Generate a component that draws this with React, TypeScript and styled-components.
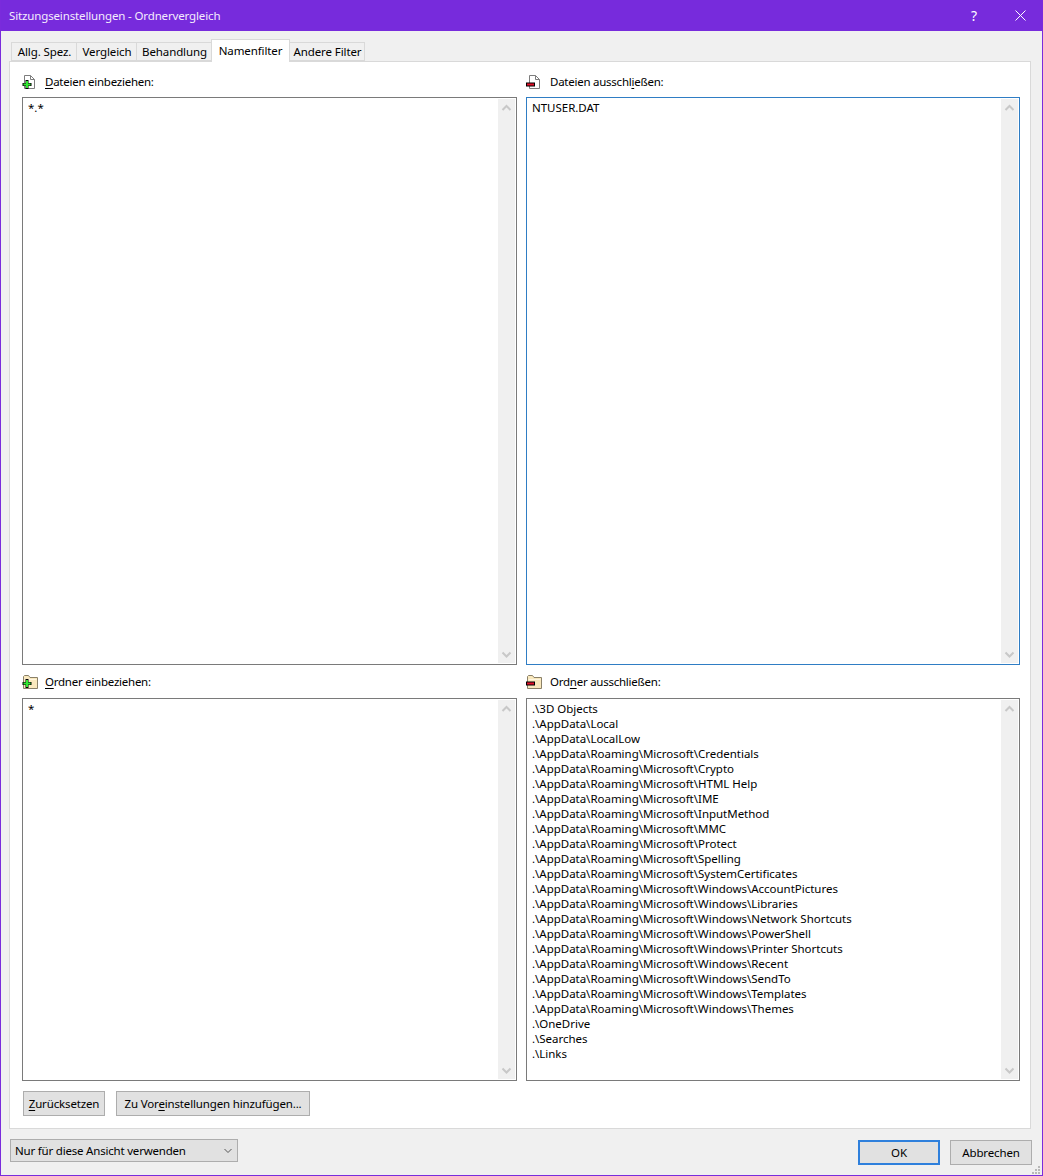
import React from 'react'
import styled, { createGlobalStyle } from 'styled-components'

const GlobalStyle = createGlobalStyle`
  html, body {
    margin: 0;
    padding: 0;
    background: #f0f0f0;
  }
  body {
    font-family: 'Noto Sans', 'Open Sans', sans-serif;
    font-size: 11.5px;
    color: #000;
  }
`

const Window = styled.div`
  width: 1043px;
  height: 1176px;
  box-sizing: border-box;
  display: flex;
  flex-direction: column;
  background: #f0f0f0;
  border: 1px solid #7a2bdc;
  border-top: 0;
  position: relative;
  overflow: hidden;
`

const TitleBar = styled.div`
  height: 31px;
  flex: none;
  margin: 0 -1px;
  display: flex;
  align-items: center;
  justify-content: space-between;
  padding: 0 0 0 9px;
  background: #772bdc;
  color: #f4ecfd;
  letter-spacing: -0.14px;
`

const TitleButtons = styled.div`
  display: flex;
  align-items: center;
`

const TitleButton = styled.div`
  width: 46px;
  height: 31px;
  display: flex;
  align-items: center;
  justify-content: center;
  font-size: 14px;
  color: #fff;
`

const Body = styled.div`
  flex: 1;
  display: flex;
  flex-direction: column;
  padding: 8px 11px 0 8px;
  min-height: 0;
`

const TabStrip = styled.div`
  display: flex;
  align-items: flex-end;
  height: 22px;
  padding-left: 3px;
  position: relative;
  z-index: 1;
  letter-spacing: -0.1px;
`

const Tab = styled.div<{ $active?: boolean; $width: number }>`
  width: ${({ $width }) => $width}px;
  box-sizing: border-box;
  height: ${({ $active }) => ($active ? '23px' : '19px')};
  margin-bottom: ${({ $active }) => ($active ? '-1px' : '0')};
  margin-left: -1px;
  position: relative;
  display: flex;
  align-items: center;
  justify-content: center;
  background: ${({ $active }) => ($active ? '#fff' : '#f0f0f0')};
  border: 1px solid #d9d9d9;
  border-bottom: ${({ $active }) => ($active ? '0' : '1px solid #d9d9d9')};
  z-index: ${({ $active }) => ($active ? 2 : 1)};
  white-space: nowrap;
  padding-bottom: ${({ $active }) => ($active ? '2px' : '0')};
  padding-left: ${({ $active }) => ($active ? '0' : '1px')};
`

const Panel = styled.div`
  width: 1022px;
  height: 1068px;
  box-sizing: border-box;
  background: #fff;
  border: 1px solid #d9d9d9;
  padding: 9px 10px 0 12px;
  display: flex;
  flex-direction: column;
`

const FilterGrid = styled.div`
  display: grid;
  grid-template-columns: 495px 494px;
  column-gap: 9px;
  row-gap: 7px;
  grid-template-rows: 594px 409px;
`

const FilterCell = styled.div`
  display: flex;
  flex-direction: column;
  min-height: 0;
`

const FilterLabel = styled.div<{ $wide?: boolean; $compact?: boolean }>`
  height: 26px;
  flex: none;
  display: flex;
  align-items: flex-start;
  gap: ${({ $wide }) => ($wide ? '8px' : '7px')};
  line-height: ${({ $compact }) => ($compact ? '20px' : '22px')};
  white-space: nowrap;
  letter-spacing: -0.25px;
`

const IconSlot = styled.svg`
  width: 16px;
  height: 16px;
  margin-top: 3px;
  flex: none;
`

const Key = styled.span`
  text-decoration: underline;
  text-underline-offset: 2px;
`

const ListBox = styled.div<{ $focused?: boolean }>`
  flex: 1;
  min-height: 0;
  box-sizing: border-box;
  border: 1px solid ${({ $focused }) => ($focused ? '#2f7dc4' : '#7a7a7a')};
  display: flex;
  background: #fff;
`

const ListText = styled.div`
  flex: 1;
  padding: 2px 5px;
  line-height: 15px;
  white-space: pre;
  overflow: hidden;
  letter-spacing: -0.02px;
`

const ScrollTrack = styled.div`
  width: 17px;
  margin: 1px;
  flex: none;
  background: #f0f0f0;
  display: flex;
  flex-direction: column;
  justify-content: space-between;
  align-items: center;
`

const ScrollArrow = styled.svg`
  width: 17px;
  height: 17px;
  display: block;
`

const PanelButtons = styled.div`
  display: flex;
  gap: 11px;
  margin-top: 10px;
  margin-left: 1px;
`

const PushButton = styled.div<{ $default?: boolean; $width: number }>`
  width: ${({ $width }) => $width}px;
  height: 25px;
  box-sizing: border-box;
  background: #e1e1e1;
  border: ${({ $default }) => ($default ? '2px solid #2f80dc' : '1px solid #adadad')};
  display: flex;
  align-items: center;
  justify-content: center;
  white-space: nowrap;
  letter-spacing: -0.15px;
`

const Footer = styled.div`
  display: flex;
  align-items: flex-start;
  justify-content: space-between;
  margin-top: 10px;
  padding-left: 1px;
`

const ComboBox = styled.div`
  width: 228px;
  height: 23px;
  box-sizing: border-box;
  background: #e1e1e1;
  border: 1px solid #adadad;
  display: flex;
  align-items: center;
  justify-content: space-between;
  padding: 0 2px 0 4px;
  letter-spacing: -0.2px;
`

const FooterButtons = styled.div`
  display: flex;
  gap: 10px;
  margin-right: -1px;
  margin-top: 1px;
`

const Grip = styled.svg`
  position: absolute;
  right: 2px;
  bottom: 1px;
  width: 8px;
  height: 8px;
`

const ScrollBar = () => (
  <ScrollTrack>
    <ScrollArrow viewBox="0 0 17 17">
      <path d="M4.5 11 8.5 7 12.5 11" fill="none" stroke="#c8c8c8" strokeWidth="2" />
    </ScrollArrow>
    <ScrollArrow viewBox="0 0 17 17">
      <path d="M4.5 6.5 8.5 10.5 12.5 6.5" fill="none" stroke="#c8c8c8" strokeWidth="2" />
    </ScrollArrow>
  </ScrollTrack>
)

const FileShape = () => (
  <path d="M2.5 1.5H8.5L12.5 5.5V14.5H2.5Z M8.5 1.5V5.5H12.5" fill="#fff" stroke="#7d7d7d" />
)

const FolderShape = () => (
  <>
    <path d="M1.5 1.5 2.5 .5H6.5L8 2.5H15.5V13.5H1.5Z" fill="#f9e8bd" stroke="#8a8068" />
    <path d="M2.5 4.5H14.5" stroke="#fff6df" />
  </>
)

// centre of the mark sits at x=5, y given by the icon
const PlusMark = ({ y }: { y: number }) => (
  <g transform={`translate(5 ${y})`}>
    <path d="M-1.5 -4.5H1.5V-1.5H4.5V1.5H1.5V4.5H-1.5V1.5H-4.5V-1.5H-1.5Z" fill="#000" />
    <path d="M0 -3.5V3.5M-3.5 0H3.5" stroke="#32e632" strokeWidth="2" />
  </g>
)

const MinusMark = ({ y }: { y: number }) => (
  <g transform={`translate(4.5 ${y})`}>
    <rect x="-4.5" y="-2" width="9" height="4" fill="#000" />
    <rect x="-3.5" y="-1" width="7" height="2" fill="#e4102a" />
  </g>
)

const FileIncludeIcon = () => (
  <IconSlot viewBox="0 0 16 16">
    <FileShape />
    <PlusMark y={10.5} />
  </IconSlot>
)

const FileExcludeIcon = () => (
  <IconSlot viewBox="0 0 16 16">
    <g transform="translate(1 0)">
      <FileShape />
    </g>
    <MinusMark y={10.5} />
  </IconSlot>
)

const FolderIncludeIcon = () => (
  <IconSlot viewBox="0 0 16 16">
    <FolderShape />
    <PlusMark y={8.5} />
  </IconSlot>
)

const FolderExcludeIcon = () => (
  <IconSlot viewBox="0 0 16 16">
    <FolderShape />
    <MinusMark y={8.5} />
  </IconSlot>
)

const excludedFolders = [
  '.\\3D Objects',
  '.\\AppData\\Local',
  '.\\AppData\\LocalLow',
  '.\\AppData\\Roaming\\Microsoft\\Credentials',
  '.\\AppData\\Roaming\\Microsoft\\Crypto',
  '.\\AppData\\Roaming\\Microsoft\\HTML Help',
  '.\\AppData\\Roaming\\Microsoft\\IME',
  '.\\AppData\\Roaming\\Microsoft\\InputMethod',
  '.\\AppData\\Roaming\\Microsoft\\MMC',
  '.\\AppData\\Roaming\\Microsoft\\Protect',
  '.\\AppData\\Roaming\\Microsoft\\Spelling',
  '.\\AppData\\Roaming\\Microsoft\\SystemCertificates',
  '.\\AppData\\Roaming\\Microsoft\\Windows\\AccountPictures',
  '.\\AppData\\Roaming\\Microsoft\\Windows\\Libraries',
  '.\\AppData\\Roaming\\Microsoft\\Windows\\Network Shortcuts',
  '.\\AppData\\Roaming\\Microsoft\\Windows\\PowerShell',
  '.\\AppData\\Roaming\\Microsoft\\Windows\\Printer Shortcuts',
  '.\\AppData\\Roaming\\Microsoft\\Windows\\Recent',
  '.\\AppData\\Roaming\\Microsoft\\Windows\\SendTo',
  '.\\AppData\\Roaming\\Microsoft\\Windows\\Templates',
  '.\\AppData\\Roaming\\Microsoft\\Windows\\Themes',
  '.\\OneDrive',
  '.\\Searches',
  '.\\Links',
]

const tabs = [
  { label: 'Allg. Spez.', width: 66 },
  { label: 'Vergleich', width: 61 },
  { label: 'Behandlung', width: 76 },
  { label: 'Namenfilter', width: 79, active: true },
  { label: 'Andere Filter', width: 76 },
]

export default function App() {
  return (
    <>
      <GlobalStyle />
      <Window>
        <TitleBar>
          <span>Sitzungseinstellungen - Ordnervergleich</span>
          <TitleButtons>
            <TitleButton>?</TitleButton>
            <TitleButton>
              <svg width="11" height="11" viewBox="0 0 11 11">
                <path d="M.5 .5 10.5 10.5M10.5 .5 .5 10.5" stroke="#fff" fill="none" />
              </svg>
            </TitleButton>
          </TitleButtons>
        </TitleBar>
        <Body>
          <TabStrip>
            {tabs.map((tab) => (
              <Tab key={tab.label} $active={tab.active} $width={tab.width}>
                {tab.label}
              </Tab>
            ))}
          </TabStrip>
          <Panel>
            <FilterGrid>
              <FilterCell>
                <FilterLabel>
                  <FileIncludeIcon />
                  <span>
                    <Key>D</Key>ateien einbeziehen:
                  </span>
                </FilterLabel>
                <ListBox>
                  <ListText>*.*</ListText>
                  <ScrollBar />
                </ListBox>
              </FilterCell>
              <FilterCell>
                <FilterLabel $wide>
                  <FileExcludeIcon />
                  <span>
                    Dateien ausschl<Key>i</Key>eßen:
                  </span>
                </FilterLabel>
                <ListBox $focused>
                  <ListText>NTUSER.DAT</ListText>
                  <ScrollBar />
                </ListBox>
              </FilterCell>
              <FilterCell>
                <FilterLabel $compact>
                  <FolderIncludeIcon />
                  <span>
                    <Key>O</Key>rdner einbeziehen:
                  </span>
                </FilterLabel>
                <ListBox>
                  <ListText>*</ListText>
                  <ScrollBar />
                </ListBox>
              </FilterCell>
              <FilterCell>
                <FilterLabel $wide $compact>
                  <FolderExcludeIcon />
                  <span>
                    Ord<Key>n</Key>er ausschließen:
                  </span>
                </FilterLabel>
                <ListBox>
                  <ListText>{excludedFolders.join('\n')}</ListText>
                  <ScrollBar />
                </ListBox>
              </FilterCell>
            </FilterGrid>
            <PanelButtons>
              <PushButton $width={82}>
                <span>
                  <Key>Z</Key>urücksetzen
                </span>
              </PushButton>
              <PushButton $width={194}>
                <span>
                  Zu Vor<Key>e</Key>instellungen hinzufügen...
                </span>
              </PushButton>
            </PanelButtons>
          </Panel>
          <Footer>
            <ComboBox>
              <span>Nur für diese Ansicht verwenden</span>
              <svg width="14" height="10" viewBox="0 0 14 10">
                <path d="M3.5 3 7 6.5 10.5 3" fill="none" stroke="#555" />
              </svg>
            </ComboBox>
            <FooterButtons>
              <PushButton $default $width={82}>OK</PushButton>
              <PushButton $width={82}>Abbrechen</PushButton>
            </FooterButtons>
          </Footer>
        </Body>
        <Grip viewBox="0 0 8 8">
          <path d="M6 0h2v2H6zM3 3h2v2H3zM6 3h2v2H6zM0 6h2v2H0zM3 6h2v2H3zM6 6h2v2H6z" fill="#b8b8b8" />
        </Grip>
      </Window>
    </>
  )
}
